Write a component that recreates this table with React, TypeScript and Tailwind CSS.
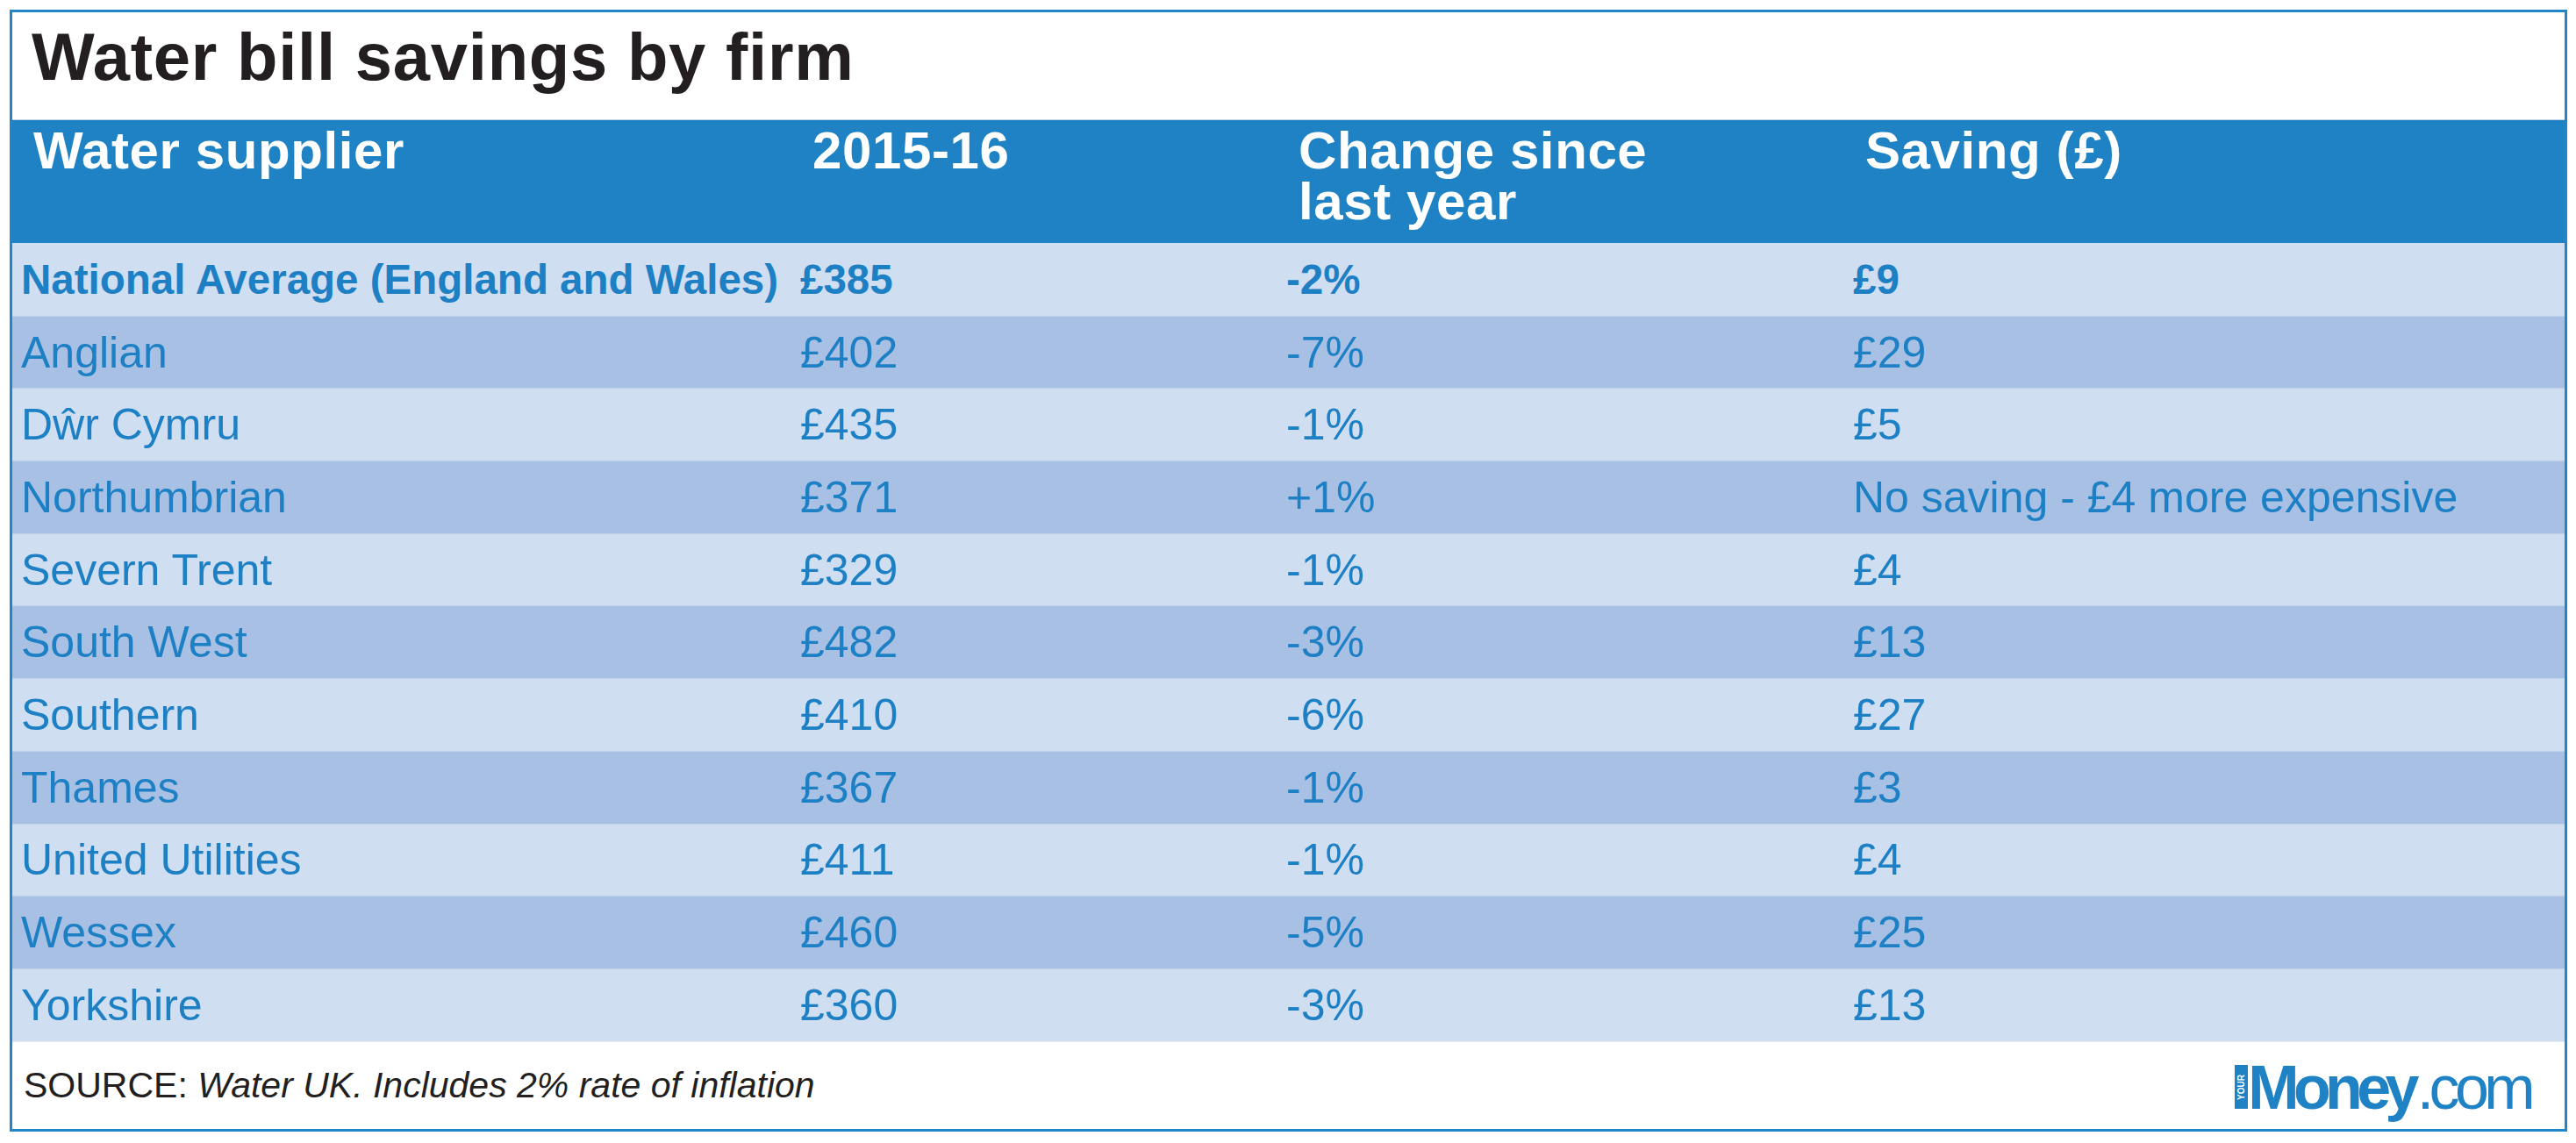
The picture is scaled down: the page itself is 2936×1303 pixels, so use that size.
const rows = [
  { name: 'National Average (England and Wales)', price: '£385', change: '-2%', saving: '£9', bold: true },
  { name: 'Anglian', price: '£402', change: '-7%', saving: '£29' },
  { name: 'Dŵr Cymru', price: '£435', change: '-1%', saving: '£5' },
  { name: 'Northumbrian', price: '£371', change: '+1%', saving: 'No saving - £4 more expensive' },
  { name: 'Severn Trent', price: '£329', change: '-1%', saving: '£4' },
  { name: 'South West', price: '£482', change: '-3%', saving: '£13' },
  { name: 'Southern', price: '£410', change: '-6%', saving: '£27' },
  { name: 'Thames', price: '£367', change: '-1%', saving: '£3' },
  { name: 'United Utilities', price: '£411', change: '-1%', saving: '£4' },
  { name: 'Wessex', price: '£460', change: '-5%', saving: '£25' },
  { name: 'Yorkshire', price: '£360', change: '-3%', saving: '£13' },
];

const cols = 'grid grid-cols-[888px_554px_646px_1fr]';

export default function App() {
  return (
    <div className="min-h-screen w-full bg-white pl-[11px] pt-[11px] font-['Liberation_Sans',Arial,sans-serif]">
      <div className="flex w-[2915px] flex-col border-[3px] border-[#2185c8] bg-white">
        {/* Title */}
        <div className="h-[123px] border-b border-[#c3d3e8] pl-[22px] pt-[13px]">
          <h1 className="text-[76px] font-bold leading-none tracking-[0.01em] text-[#231f20]">
            Water bill savings by firm
          </h1>
        </div>

        {/* Header */}
        <div className={`${cols} h-[140px] bg-[#1e82c5] pt-[6px] text-[60px] font-bold leading-[58px] tracking-[0.01em] text-white`}>
          <div className="pl-[24px]">Water supplier</div>
          <div className="pl-[24px]">2015-16</div>
          <div className="flex flex-col pl-[24px]">
            <span>Change since</span>
            <span>last year</span>
          </div>
          <div className="pl-[24px]">Saving (£)</div>
        </div>

        {/* Rows */}
        <div className="flex flex-col">
          {rows.map((r, i) => (
            <div
              key={r.name}
              className={`${cols} h-[82.7px] items-center text-[#1e80c4] ${
                i % 2 === 0 ? 'bg-[#d0def1]' : 'bg-[#a8c0e4]'
              } ${i > 0 ? 'border-t border-[#c0d1ea]' : ''} ${
                r.bold ? 'text-[47.5px] font-bold' : 'text-[50px]'
              } leading-none`}
            >
              <div className="pl-[10px]">{r.name}</div>
              <div className="pl-[10px]">{r.price}</div>
              <div className="pl-[10px]">{r.change}</div>
              <div className="pl-[10px] whitespace-nowrap">{r.saving}</div>
            </div>
          ))}
        </div>

        {/* Footer */}
        <div className="flex h-[100px] items-center justify-between border-t border-[#e4ebf5] pl-[13px] pr-[39px]">
          <p className="text-[41px] leading-none text-[#231f20]">
            SOURCE: <span className="italic">Water UK. Includes 2% rate of inflation</span>
          </p>
          <div className="flex items-end text-[#1e82c5] pt-[6px]">
            <div className="mb-[11px] flex h-[50px] w-[15px] items-center justify-center bg-[#1e82c5]">
              <span className="rotate-180 text-[10px] font-bold leading-none text-white [writing-mode:vertical-rl]">
                YOUR
              </span>
            </div>
            <span className="text-[70px] font-bold leading-none tracking-[-0.095em]">Money</span>
            <span className="ml-[4px] text-[70px] leading-none tracking-[-0.08em]">.com</span>
          </div>
        </div>
      </div>
    </div>
  );
}
